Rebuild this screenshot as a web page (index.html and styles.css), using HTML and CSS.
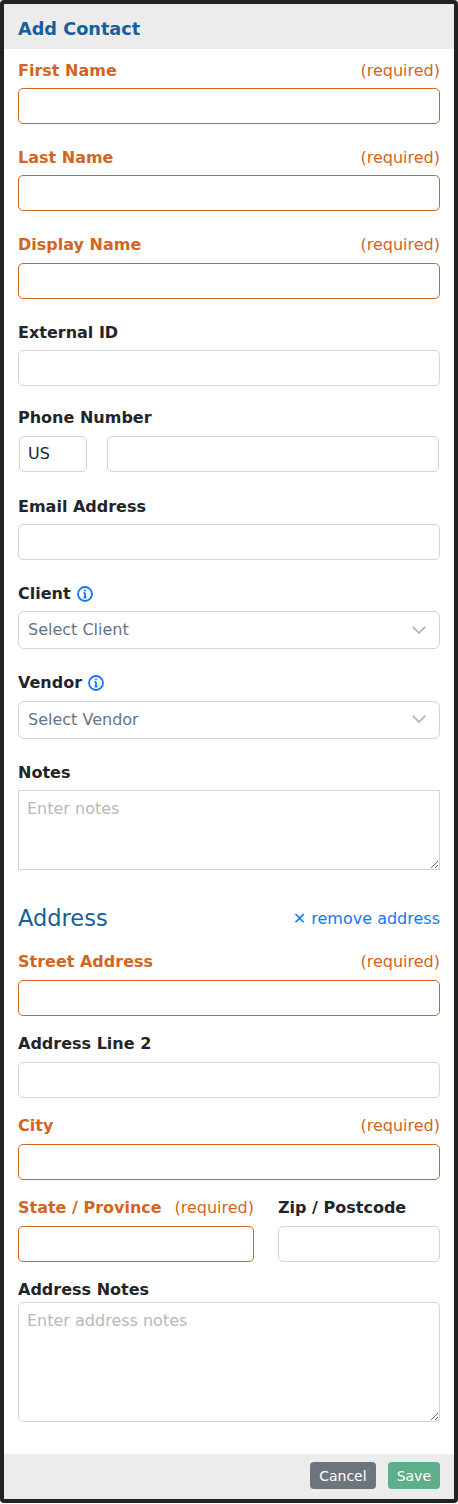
FILE: index.html
```html
<!DOCTYPE html>
<html lang="en">
<head>
  <meta charset="UTF-8">
  <title>Add Contact</title>
  <link rel="stylesheet" href="styles.css">
</head>
<body>
<div class="modal">
  <div class="modal-header">Add Contact</div>

  <form class="modal-body">
    <div class="field">
      <div class="label-row required"><label>First Name</label><span>(required)</span></div>
      <input type="text" class="input input-required">
    </div>
    <div class="field">
      <div class="label-row required"><label>Last Name</label><span>(required)</span></div>
      <input type="text" class="input input-required">
    </div>
    <div class="field">
      <div class="label-row required"><label>Display Name</label><span>(required)</span></div>
      <input type="text" class="input input-required">
    </div>
    <div class="field">
      <div class="label-row"><label>External ID</label></div>
      <input type="text" class="input">
    </div>
    <div class="field phone">
      <div class="label-row"><label>Phone Number</label></div>
      <div class="phone-row">
        <input type="text" class="input country" value="US">
        <input type="text" class="input">
      </div>
    </div>
    <div class="field">
      <div class="label-row"><label>Email Address</label></div>
      <input type="text" class="input">
    </div>
    <div class="field">
      <div class="label-row">
        <label>Client
          <svg class="info" viewBox="0 0 16 16"><circle cx="8" cy="8" r="7" /><path d="M8 7v4.5M6.6 11.5h2.8M6.6 7H8" /><circle class="dot" cx="8" cy="4.6" r="1" /></svg>
        </label>
      </div>
      <div class="select">
        <span>Select Client</span>
        <svg class="chevron" viewBox="0 0 14 8"><path d="M.8.8 7 7l6.2-6.2" /></svg>
      </div>
    </div>
    <div class="field">
      <div class="label-row">
        <label>Vendor
          <svg class="info" viewBox="0 0 16 16"><circle cx="8" cy="8" r="7" /><path d="M8 7v4.5M6.6 11.5h2.8M6.6 7H8" /><circle class="dot" cx="8" cy="4.6" r="1" /></svg>
        </label>
      </div>
      <div class="select">
        <span>Select Vendor</span>
        <svg class="chevron" viewBox="0 0 14 8"><path d="M.8.8 7 7l6.2-6.2" /></svg>
      </div>
    </div>
    <div class="field">
      <div class="label-row"><label>Notes</label></div>
      <textarea class="input notes" placeholder="Enter notes"></textarea>
    </div>

    <div class="address-head">
      <h3>Address</h3>
      <a class="remove-link"><span class="x">✕</span> remove address</a>
    </div>

    <div class="address-fields">
      <div class="field">
        <div class="label-row required"><label>Street Address</label><span>(required)</span></div>
        <input type="text" class="input input-required">
      </div>
      <div class="field">
        <div class="label-row"><label>Address Line 2</label></div>
        <input type="text" class="input">
      </div>
      <div class="field">
        <div class="label-row required"><label>City</label><span>(required)</span></div>
        <input type="text" class="input input-required">
      </div>
      <div class="field-row">
        <div class="field state">
          <div class="label-row required"><label>State / Province</label><span>(required)</span></div>
          <input type="text" class="input input-required">
        </div>
        <div class="field zip">
          <div class="label-row"><label>Zip / Postcode</label></div>
          <input type="text" class="input">
        </div>
      </div>
      <div class="field">
        <div class="label-row notes-label"><label>Address Notes</label></div>
        <textarea class="input address-notes" placeholder="Enter address notes"></textarea>
      </div>
    </div>
  </form>

  <div class="modal-footer">
    <button type="button" class="btn btn-cancel">Cancel</button>
    <button type="button" class="btn btn-save">Save</button>
  </div>
</div>
</body>
</html>
```

FILE: styles.css
```css
* {
  box-sizing: border-box;
}

html, body {
  margin: 0;
  height: 100%;
}

body {
  font-family: 'DejaVu Sans', sans-serif;
  font-size: 16px;
  background-color: #fff;
  color: #212529;
}

.modal {
  height: 1503px;
  border: 4px solid #222;
  border-radius: 4px;
  background: white;
  display: flex;
  flex-direction: column;
}

.modal-header {
  height: 45px;
  flex-shrink: 0;
  padding: 5px 14px 0;
  display: flex;
  align-items: center;
  background-color: #ececec;
  color: #14609c;
  font-size: 17.7px;
  font-weight: bold;
}

.modal-body {
  flex: 1;
  padding: 9px 14px 0;
}

.field {
  margin-bottom: 21.33px;
}

.label-row {
  display: flex;
  justify-content: space-between;
  align-items: center;
  height: 24px;
  padding-top: 0.6px;
  margin-bottom: 6px;
}

.label-row label {
  font-weight: bold;
  display: flex;
  align-items: center;
  gap: 6px;
}

.required {
  color: #d2651f;
}

.input {
  display: block;
  width: 100%;
  height: 36px;
  padding: 0 9px;
  border: 1px solid #d4d4d4;
  border-radius: 5px;
  background: white;
  font-family: inherit;
  font-size: 16px;
  color: #212529;
  outline: none;
}

.input-required {
  border-color: #d2651f;
}

.phone {
  margin-top: -2px;
  margin-bottom: 22px;
}

.phone .label-row {
  margin-bottom: 6.67px;
}

.phone-row {
  display: flex;
  gap: 20px;
  padding: 0 1px;
}

.country {
  width: 68px;
  flex-shrink: 0;
  padding: 0 8px;
}

.select {
  height: 38px;
  padding: 0 13px 1px 9px;
  border: 1px solid #cbd5e1;
  border-radius: 6px;
  display: flex;
  justify-content: space-between;
  align-items: center;
  color: #64748b;
}

.info {
  width: 16px;
  height: 16px;
  fill: none;
  stroke: #0d7bf2;
  stroke-width: 1.8;
}

.info .dot {
  fill: #0d7bf2;
  stroke: none;
}

.chevron {
  width: 14px;
  height: 8px;
  fill: none;
  stroke: #a0aec0;
  stroke-width: 1.6;
}

textarea.input {
  padding: 8px;
  line-height: 20px;
  resize: vertical;
  border-radius: 0;
}

textarea.input::placeholder {
  color: #b8b8b8;
  opacity: 1;
}

.notes {
  height: 80px;
}

textarea.address-notes {
  height: 120px;
  border-radius: 5px;
}

.address-head {
  display: flex;
  justify-content: space-between;
  align-items: center;
  margin: 35px 0 18px;
}

.address-head h3 {
  margin: 0;
  font-size: 22.5px;
  font-weight: normal;
  color: #14609c;
}

.remove-link {
  padding-top: 1px;
  color: #0d7bf2;
  cursor: pointer;
}

.address-fields .field {
  margin-bottom: 15px;
}

.address-fields .label-row {
  height: 25px;
  padding-top: 1px;
  margin-bottom: 6px;
}

.address-fields .notes-label {
  margin-bottom: 0;
}

.field-row {
  display: flex;
  gap: 24px;
}

.state {
  width: 236px;
}

.zip {
  flex: 1;
}

.modal-footer {
  height: 45px;
  flex-shrink: 0;
  padding: 8px 14px 10px;
  display: flex;
  justify-content: flex-end;
  align-items: flex-start;
  gap: 12px;
  background-color: #ececec;
}

.btn {
  height: 27px;
  padding: 0 9px;
  border: none;
  border-radius: 4px;
  color: white;
  font-family: inherit;
  font-size: 14px;
  cursor: pointer;
}

.btn-cancel {
  background-color: #6c757d;
}

.btn-save {
  background-color: #5fae8b;
}
```
